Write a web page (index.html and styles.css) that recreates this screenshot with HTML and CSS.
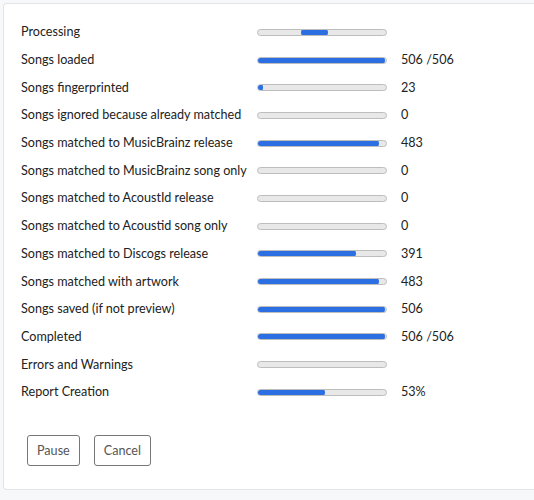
FILE: index.html
```html
<!DOCTYPE html>
<html>
<head>
<meta charset="utf-8">
<link rel="stylesheet" href="styles.css">
</head>
<body>
<div class="card">
  <div class="rows">
    <div class="label">Processing</div>
    <div class="bar"><div class="seg"></div></div>
    <div class="val"></div>

    <div class="label">Songs loaded</div>
    <div class="bar"><div class="fill" style="width:100%"></div></div>
    <div class="val">506 /506</div>

    <div class="label">Songs fingerprinted</div>
    <div class="bar"><div class="fill" style="width:4.5%"></div></div>
    <div class="val">23</div>

    <div class="label">Songs ignored because already matched</div>
    <div class="bar"><div class="fill" style="width:0%"></div></div>
    <div class="val">0</div>

    <div class="label">Songs matched to MusicBrainz release</div>
    <div class="bar"><div class="fill" style="width:95.5%"></div></div>
    <div class="val">483</div>

    <div class="label">Songs matched to MusicBrainz song only</div>
    <div class="bar"><div class="fill" style="width:0%"></div></div>
    <div class="val">0</div>

    <div class="label">Songs matched to AcoustId release</div>
    <div class="bar"><div class="fill" style="width:0%"></div></div>
    <div class="val">0</div>

    <div class="label">Songs matched to Acoustid song only</div>
    <div class="bar"><div class="fill" style="width:0%"></div></div>
    <div class="val">0</div>

    <div class="label">Songs matched to Discogs release</div>
    <div class="bar"><div class="fill" style="width:77.3%"></div></div>
    <div class="val">391</div>

    <div class="label">Songs matched with artwork</div>
    <div class="bar"><div class="fill" style="width:95.5%"></div></div>
    <div class="val">483</div>

    <div class="label">Songs saved (if not preview)</div>
    <div class="bar"><div class="fill" style="width:100%"></div></div>
    <div class="val">506</div>

    <div class="label">Completed</div>
    <div class="bar"><div class="fill" style="width:100%"></div></div>
    <div class="val">506 /506</div>

    <div class="label">Errors and Warnings</div>
    <div class="bar"><div class="fill" style="width:0%"></div></div>
    <div class="val"></div>

    <div class="label">Report Creation</div>
    <div class="bar"><div class="fill" style="width:53%"></div></div>
    <div class="val">53%</div>
  </div>
  <div class="buttons">
    <button class="btn">Pause</button>
    <button class="btn">Cancel</button>
  </div>
</div>
</body>
</html>
```
FILE: styles.css
```css
html, body {
  margin: 0;
  padding: 0;
  background: #f7f8fa;
}
body {
  padding: 3px 0 0 3px;
  font-family: Lato, "Noto Sans", sans-serif;
  font-size: 12.6px;
  color: #222;
  overflow: hidden;
}
.card {
  background: #fff;
  border: 1px solid #e2e4e7;
  border-right: none;
  border-radius: 4px 0 0 4px;
  padding: 14px 0 23px 17px;
}
.rows {
  display: grid;
  grid-template-columns: 222px 130px auto;
  grid-auto-rows: 27.7px;
  column-gap: 14px;
  align-items: center;
}
.label {
  white-space: nowrap;
}
.bar {
  position: relative;
  height: 7px;
  border: 1px solid #bdbdbd;
  background: #e8e8e8;
  border-radius: 4px;
  overflow: hidden;
  box-sizing: border-box;
  margin-top: 1px;
}
.fill {
  position: absolute;
  left: -1px;
  top: -1px;
  bottom: -1px;
  background: #2c6fe3;
  border-radius: 4px;
}
.seg {
  position: absolute;
  left: 43px;
  width: 27px;
  top: -1px;
  bottom: -1px;
  background: #2c6fe3;
  border-radius: 4px;
}
.buttons {
  display: flex;
  gap: 14px;
  margin: 29px 0 0 6px;
}
.btn {
  font-family: inherit;
  font-size: 12.6px;
  color: #555;
  background: #fff;
  border: 1px solid #777;
  border-radius: 3px;
  height: 31px;
  padding: 0 9px;
}
```
